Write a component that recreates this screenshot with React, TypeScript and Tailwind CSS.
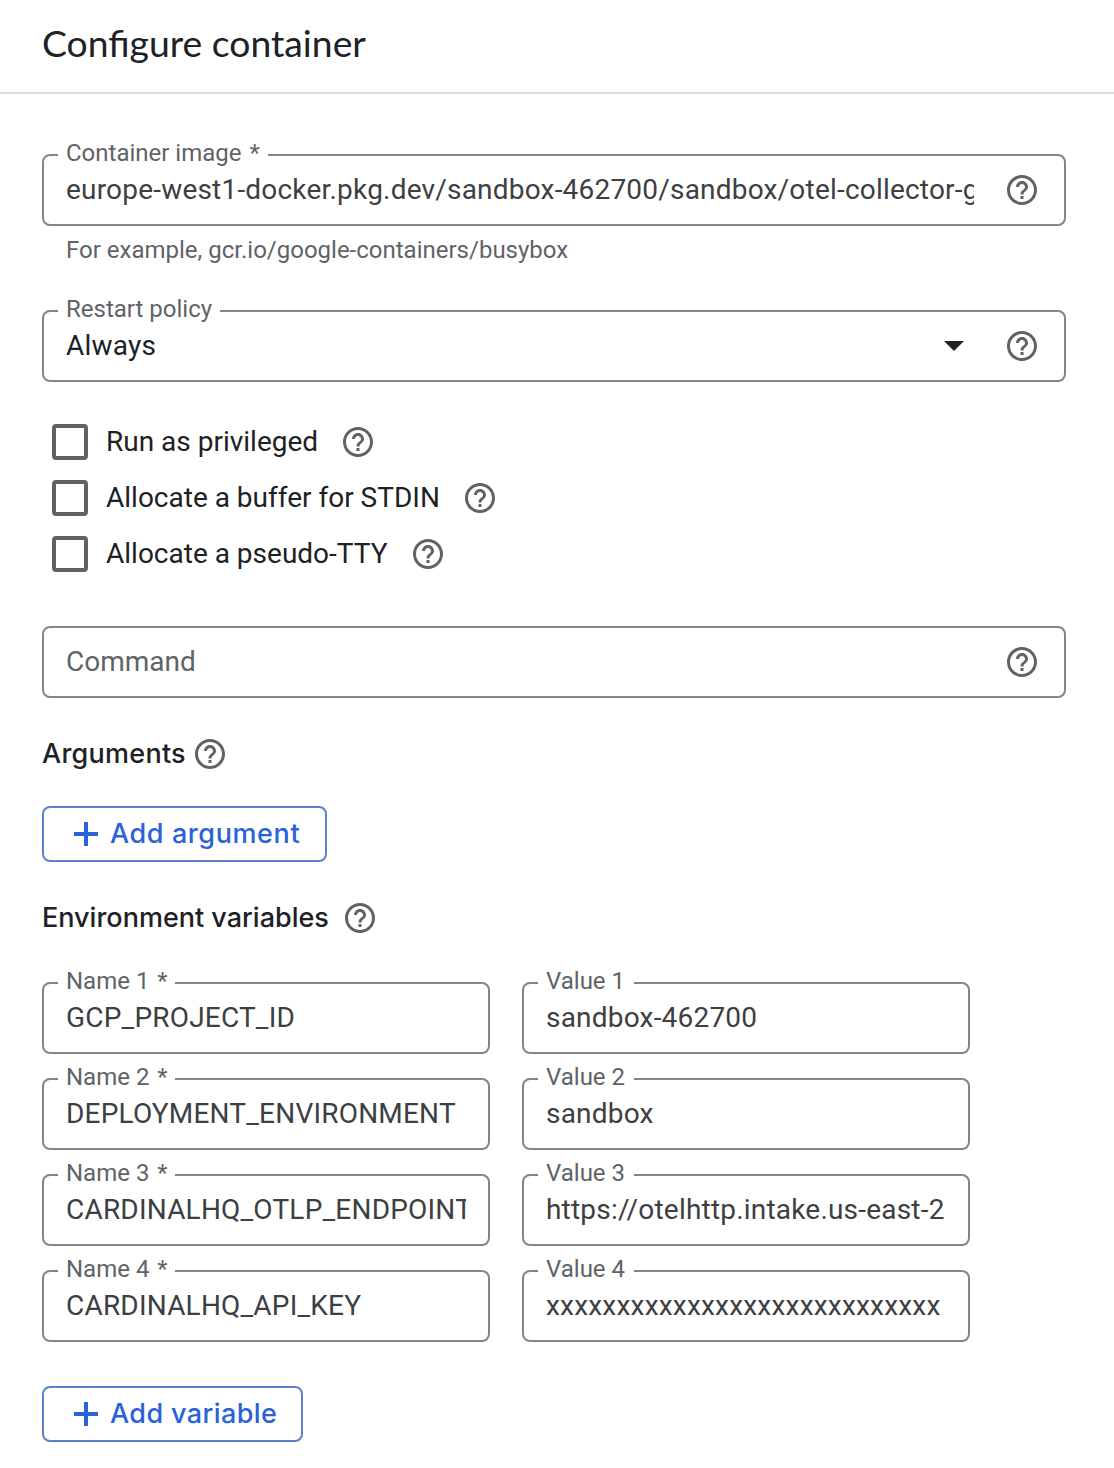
import React from "react";

function HelpIcon() {
  return (
    <svg className="size-9 shrink-0 text-[#5f6368]" viewBox="0 0 24 24" fill="currentColor" aria-label="Help">
      <path d="M11 18h2v-2h-2v2zm1-16C6.48 2 2 6.48 2 12s4.48 10 10 10 10-4.48 10-10S17.52 2 12 2zm0 18c-4.41 0-8-3.59-8-8s3.59-8 8-8 8 3.59 8 8-3.59 8-8 8zm0-14c-2.21 0-4 1.79-4 4h2c0-1.1.9-2 2-2s2 .9 2 2c0 2-3 1.75-3 5h2c0-2.25 3-2.5 3-5 0-2.21-1.79-4-4-4z" />
    </svg>
  );
}

type FieldProps = {
  label?: string;
  required?: boolean;
  notch?: string;
  value: string;
  valueClass?: string;
  className?: string;
  children?: React.ReactNode;
};

function Field({ label, required, notch = "", value, valueClass = "text-[#3c4043] tracking-[0.2px]", className = "", children }: FieldProps) {
  return (
    <div className={`relative flex h-[72px] items-center rounded-lg border-2 border-[#80868b] pl-[22px] ${className}`}>
      {label && (
        <span className={`absolute -top-[19px] left-[14px] h-8 whitespace-pre bg-white pl-2 text-2xl leading-8 text-[#5f6368] ${notch}`}>
          {label}
          {required && <span className="ml-[2px]"> *</span>}
        </span>
      )}
      <span className={`min-w-0 flex-1 overflow-hidden whitespace-nowrap text-[28px] leading-10 ${valueClass}`}>{value}</span>
      {children}
    </div>
  );
}

function CheckRow({ text }: { text: string }) {
  return (
    <div className="flex h-14 items-center">
      <span className="ml-[10px] size-9 rounded-[4px] border-4 border-[#5f6368]" />
      <span className="ml-[18px] mr-[22px] text-[28px] leading-10 text-[#202124]">{text}</span>
      <HelpIcon />
    </div>
  );
}

function AddButton({ text, className }: { text: string; className: string }) {
  return (
    <button className={`flex h-14 items-center rounded-lg border-2 border-[#5c80cc] pl-6 font-['Inter'] text-[27px] font-medium text-[#2962d9] ${className}`}>
      <svg className="mr-[6px] size-9" viewBox="0 0 36 36" fill="currentColor">
        <path d="M16 6h4v10h10v4H20v10h-4V20H6v-4h10z" />
      </svg>
      {text}
    </button>
  );
}

const variables = [
  ["GCP_PROJECT_ID", "sandbox-462700"],
  ["DEPLOYMENT_ENVIRONMENT", "sandbox"],
  ["CARDINALHQ_OTLP_ENDPOINT", "https://otelhttp.intake.us-east-2"],
  ["CARDINALHQ_API_KEY", "xxxxxxxxxxxxxxxxxxxxxxxxxxxx"],
];

export default function App() {
  return (
    <div className="h-[1468px] w-[1114px] overflow-hidden bg-white font-['Roboto',sans-serif]">
      <header className="flex h-[94px] items-center border-b-2 border-[#dadce0] pb-[7px] pl-[42px]">
        <h1 className="font-['Lato'] text-[37.3px] text-[#202124]">Configure container</h1>
      </header>
      <main className="flex flex-col items-start pl-[42px] pt-[60px]">
        <Field label="Container image" required notch="w-[210px]" value="europe-west1-docker.pkg.dev/sandbox-462700/sandbox/otel-collector-gcp" className="w-[1024px] pr-6">
          <span className="ml-[30px] flex"><HelpIcon /></span>
        </Field>
        <p className="ml-6 mt-2 text-2xl leading-8 text-[#5f6368]">For example, gcr.io/google-containers/busybox</p>
        <Field label="Restart policy" notch="w-[162px]" value="Always" valueClass="text-[#202124] tracking-[0.2px]" className="mt-[44px] w-[1024px] pr-6">
          <svg className="mr-10 h-[10px] w-5" viewBox="0 0 20 10" fill="#202124"><path d="M0 0h20L10 10z" /></svg>
          <HelpIcon />
        </Field>
        <div className="mt-8">
          <CheckRow text="Run as privileged" />
          <CheckRow text="Allocate a buffer for STDIN" />
          <CheckRow text="Allocate a pseudo-TTY" />
        </div>
        <Field value="Command" valueClass="text-[#5f6368]" className="mt-[44px] w-[1024px] pr-6">
          <HelpIcon />
        </Field>
        <h2 className="mt-9 flex h-10 items-center gap-[6px] font-['Inter'] text-[27px] font-medium tracking-[0.25px] text-[#202124]">
          <span>Arguments</span>
          <HelpIcon />
        </h2>
        <AddButton text="Add argument" className="mt-8 w-[285px] tracking-[0.6px]" />
        <h2 className="mt-9 flex h-10 items-center gap-[13px] font-['Inter'] text-[27px] font-medium text-[#202124]">
          <span>Environment variables</span>
          <HelpIcon />
        </h2>
        <div className="mt-11 grid grid-cols-[448px_448px] gap-x-8 gap-y-6">
          {variables.map(([name, value], i) => (
            <React.Fragment key={name}>
              <Field label={`Name ${i + 1}`} required notch="w-[117px]" value={name} className="pr-[22px]" />
              <Field label={`Value ${i + 1}`} notch="w-[96px]" value={value} className="pr-[22px]" />
            </React.Fragment>
          ))}
        </div>
        <AddButton text="Add variable" className="mt-11 w-[261px] tracking-[0.4px]" />
      </main>
    </div>
  );
}
